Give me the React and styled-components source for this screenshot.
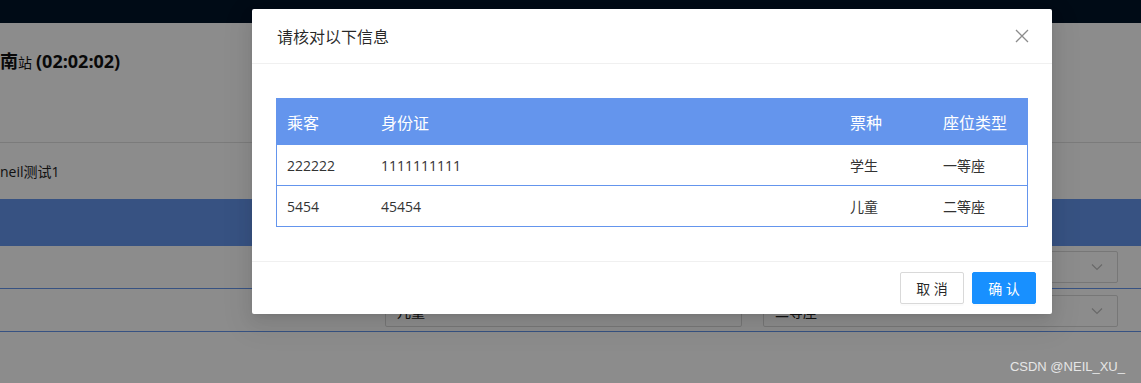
import styled, { createGlobalStyle } from "styled-components"

const GlobalStyle = createGlobalStyle`
  html, body {
    margin: 0;
    padding: 0;
    background: #fff;
  }
  body {
    font-family: "Open Sans", "Noto Sans CJK SC", sans-serif;
    font-size: 14px;
    color: rgba(0, 0, 0, 0.85);
  }
`

const Page = styled.div`
  position: relative;
  width: 1141px;
  height: 383px;
  overflow: hidden;
  background: #fff;
`

const TopBar = styled.div`
  height: 23px;
  background: #001529;
`

const TrainHead = styled.div`
  height: 120px;
  border-bottom: 1px solid #e0e0e0;
  padding-top: 24px;
  box-sizing: border-box;
  font-size: 18px;
  font-weight: 700;
  color: #111;
  white-space: nowrap;

  small {
    font-size: 14px;
    font-weight: 400;
    margin-right: 4px;
  }
`

const InfoLine = styled.div`
  height: 56px;
  display: flex;
  align-items: center;
  color: #222;
`

const Band = styled.div`
  height: 47px;
  background: #6495ed;
`

const SeatRow = styled.div`
  display: flex;
  gap: 21px;
  padding: ${p => p.$top}px 23px 0 385px;
  height: 43px;
  box-sizing: border-box;
  border-bottom: 1px solid #6495ed;
`

const Select = styled.div`
  width: ${p => p.$w}px;
  height: 32px;
  box-sizing: border-box;
  border: 1px solid #d9d9d9;
  border-radius: 2px;
  display: flex;
  align-items: center;
  justify-content: space-between;
  padding: 0 14px 0 11px;
  color: #222;
`

const Overlay = styled.div`
  position: absolute;
  inset: 0;
  background: rgba(0, 0, 0, 0.45);
`

const Modal = styled.div`
  position: absolute;
  top: 9px;
  left: 252px;
  width: 800px;
  background: #fff;
  border-radius: 2px;
  box-shadow: 0 3px 6px -4px rgba(0, 0, 0, 0.12), 0 6px 16px 0 rgba(0, 0, 0, 0.08),
    0 9px 28px 8px rgba(0, 0, 0, 0.05);
`

const ModalHead = styled.div`
  height: 55px;
  box-sizing: border-box;
  padding: 0 23px 0 25px;
  border-bottom: 1px solid #f0f0f0;
  display: flex;
  align-items: center;
  justify-content: space-between;
  font-size: 16px;
  color: rgba(0, 0, 0, 0.85);
`

const Close = styled.span`
  display: flex;
  width: 14px;
  height: 14px;
  color: rgba(0, 0, 0, 0.45);
`

const ModalBody = styled.div`
  padding: 34px 24px;
`

const Table = styled.div`
  border: 1px solid #6495ed;
  border-top: none;
`

const Row = styled.div`
  display: grid;
  grid-template-columns: 94px 469px 93px 94px;
  height: ${p => (p.$head ? 47 : 40)}px;
  align-items: center;
  background: ${p => (p.$head ? "#6495ed" : "#fff")};
  color: ${p => (p.$head ? "#fff" : "#333")};
  font-size: ${p => (p.$head ? 16 : 14)}px;
  border-top: ${p => (p.$head ? "none" : "1px solid #6495ed")};

  &:nth-child(2) {
    border-top: none;
  }
`

const Cell = styled.div`
  padding-left: 10px;
  white-space: nowrap;
`

const ModalFoot = styled.div`
  border-top: 1px solid #f0f0f0;
  padding: 10px 16px;
  display: flex;
  justify-content: flex-end;
  gap: 8px;
`

const Button = styled.button`
  width: 64px;
  height: 32px;
  border-radius: 2px;
  font-family: "Open Sans", "Noto Sans CJK SC", sans-serif;
  font-size: 14px;
  padding: 0;
  cursor: pointer;
  border: 1px solid ${p => (p.$primary ? "#1890ff" : "#d9d9d9")};
  background: ${p => (p.$primary ? "#1890ff" : "#fff")};
  color: ${p => (p.$primary ? "#fff" : "rgba(0, 0, 0, 0.85)")};
  box-shadow: 0 2px 0 rgba(0, 0, 0, 0.015);
`

const Watermark = styled.div`
  position: absolute;
  right: 16px;
  bottom: 9px;
  font-family: "Liberation Sans", Arial, sans-serif;
  font-size: 13px;
  color: #e6e6e6;
`

const Chevron = () => (
  <svg width="12" height="8" viewBox="0 0 12 8" fill="none" stroke="#bfbfbf" strokeWidth="1.2">
    <path d="M1 1.5 L6 6.5 L11 1.5" />
  </svg>
)

const passengers = [
  { name: "222222", id: "1111111111", type: "学生", seat: "一等座" },
  { name: "5454", id: "45454", type: "儿童", seat: "二等座" },
]

export default function App() {
  return (
    <>
      <GlobalStyle />
      <Page>
        <TopBar />
        <TrainHead>
          南<small>站</small>(02:02:02)
        </TrainHead>
        <InfoLine>neil测试1</InfoLine>
        <Band />
        <SeatRow $top={5}>
          <Select $w={357}><span /><Chevron /></Select>
          <Select $w={355}><span /><Chevron /></Select>
        </SeatRow>
        <SeatRow $top={6}>
          <Select $w={357}><span>儿童</span><Chevron /></Select>
          <Select $w={355}><span>二等座</span><Chevron /></Select>
        </SeatRow>

        <Overlay />

        <Modal>
          <ModalHead>
            <span>请核对以下信息</span>
            <Close>
              <svg width="14" height="14" viewBox="0 0 14 14" stroke="currentColor" strokeWidth="1.3">
                <path d="M1 1 L13 13 M13 1 L1 13" />
              </svg>
            </Close>
          </ModalHead>
          <ModalBody>
            <Table>
              <Row $head>
                <Cell>乘客</Cell>
                <Cell>身份证</Cell>
                <Cell>票种</Cell>
                <Cell>座位类型</Cell>
              </Row>
              {passengers.map((p, i) => (
                <Row key={i}>
                  <Cell>{p.name}</Cell>
                  <Cell>{p.id}</Cell>
                  <Cell>{p.type}</Cell>
                  <Cell>{p.seat}</Cell>
                </Row>
              ))}
            </Table>
          </ModalBody>
          <ModalFoot>
            <Button>取 消</Button>
            <Button $primary>确 认</Button>
          </ModalFoot>
        </Modal>

        <Watermark>CSDN @NEIL_XU_</Watermark>
      </Page>
    </>
  )
}
